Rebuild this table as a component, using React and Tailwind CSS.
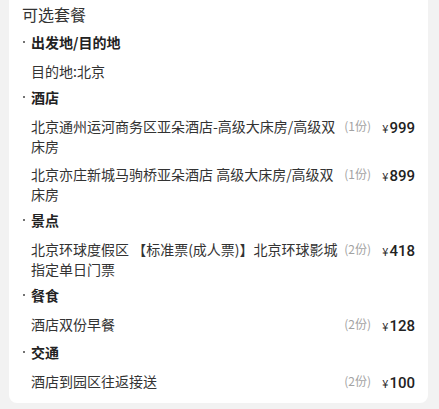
import React from "react";

const sections = [
  { title: "出发地/目的地", items: [{ text: "目的地:北京" }] },
  {
    title: "酒店",
    items: [
      { text: "北京通州运河商务区亚朵酒店-高级大床房/高级双床房", qty: "(1份)", price: "999" },
      { text: "北京亦庄新城马驹桥亚朵酒店 高级大床房/高级双床房", qty: "(1份)", price: "899" },
    ],
  },
  {
    title: "景点",
    items: [
      { text: "北京环球度假区 【标准票(成人票)】北京环球影城指定单日门票", qty: "(2份)", price: "418" },
    ],
  },
  { title: "餐食", items: [{ text: "酒店双份早餐", qty: "(2份)", price: "128" }] },
  { title: "交通", items: [{ text: "酒店到园区往返接送", qty: "(2份)", price: "100" }] },
];

function Item({ item, first }) {
  return (
    <div className={`flex items-start pl-[9px] ${first ? "mt-[9px]" : "mt-[8px]"}`}>
      <div className="flex-1 min-w-0 text-[14px] leading-[20px] text-[#333333]">{item.text}</div>
      {item.price && (
        <>
          <div className="shrink-0 ml-[3px] text-[12px] leading-[20px] text-[#a3a3a3]">{item.qty}</div>
          <div className="shrink-0 w-[44px] text-right leading-[20px] text-[#222222] whitespace-nowrap">
            <span className="text-[11px] mr-[1px]">¥</span>
            <span
              className="text-[15px] font-medium"
              style={{ fontFamily: "Roboto, 'Liberation Sans', sans-serif" }}
            >
              {item.price}
            </span>
          </div>
        </>
      )}
    </div>
  );
}

export default function App() {
  return (
    <div
      className="w-[439px] h-[409px] bg-[#f2f2f2] overflow-hidden"
      style={{ fontFamily: "'Noto Sans CJK SC', 'Noto Sans', sans-serif" }}
    >
      <div className="ml-[9px] w-[419px] bg-white rounded-b-[8px] pl-[13px] pr-[13px] pt-[2px] pb-[10px]">
        <div className="text-[16px] leading-[24px] text-[#333333]">可选套餐</div>
        <div className="mt-[1px]">
          {sections.map((s, i) => (
            <div key={i}>
              <div className="flex items-center mt-[6px] text-[14px] leading-[20px] font-bold text-[#222222]">
                <span className="w-[2px] h-[2px] rounded-full bg-[#444444] ml-[1px] mr-[6px]" />
                <span>{s.title}</span>
              </div>
              {s.items.map((it, j) => (
                <Item key={j} item={it} first={j === 0} />
              ))}
            </div>
          ))}
        </div>
      </div>
    </div>
  );
}
